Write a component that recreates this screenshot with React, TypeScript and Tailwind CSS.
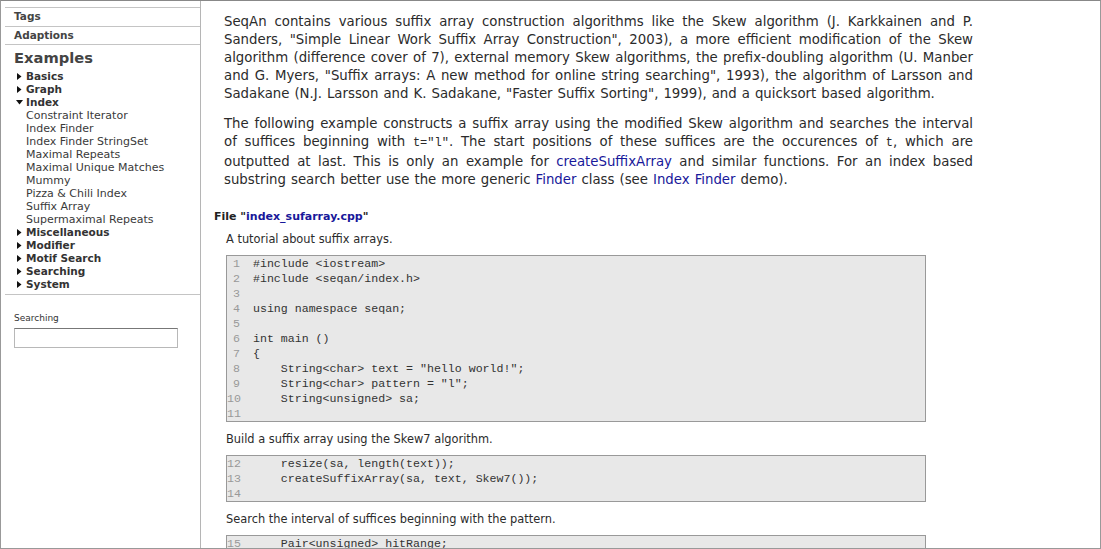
import React from "react";

const Tri = ({ open }: { open?: boolean }) =>
  open ? (
    <svg width="7" height="5" viewBox="0 0 7 5" className="absolute left-[11px] top-[4px]">
      <polygon points="0,0 7,0 3.5,4.5" fill="#111" />
    </svg>
  ) : (
    <svg width="5" height="7" viewBox="0 0 5 7" className="absolute left-[12px] top-[3px]">
      <polygon points="0,0 4.5,3.5 0,7" fill="#111" />
    </svg>
  );

const Group = ({ label, open }: { label: string; open?: boolean }) => (
  <div className="relative h-[13px] pl-[21px] font-bold text-[10.5px] leading-[13px] text-[#333]">
    <Tri open={open} />
    {label}
  </div>
);

const Sub = ({ label }: { label: string }) => (
  <div className="h-[13px] pl-[21px] text-[11px] leading-[13px] text-[#3a3a3a]">{label}</div>
);

const J = ({ children, extra }: { children: React.ReactNode; extra?: boolean }) => (
  <span className={extra ? "block pb-[1px] text-justify [text-align-last:justify]" : "block text-justify [text-align-last:justify]"}>
    {children}
  </span>
);

const L = ({ children }: { children: React.ReactNode }) => (
  <span className="block [word-spacing:0.8px]">{children}</span>
);

const Lk = ({ children }: { children: React.ReactNode }) => (
  <span className="text-[#18189a]">{children}</span>
);

const Mono = ({ children }: { children: React.ReactNode }) => (
  <span className="font-['Liberation_Mono',monospace] text-[12px]">{children}</span>
);

const Code = ({ lines }: { lines: [number, string][] }) => (
  <div className="w-[700px] border border-[#999] bg-[#e8e8e8] font-['Liberation_Mono',monospace] text-[11.6px] leading-[15px]">
    {lines.map(([n, t]) => (
      <div key={n} className="flex h-[15px]">
        <span className="w-[13px] text-right text-[#999] shrink-0">{n}</span>
        <span className="ml-[13px] whitespace-pre text-[#333]">{t}</span>
      </div>
    ))}
  </div>
);

export default function App() {
  return (
    <div className="w-[1101px] h-[549px] border border-[#999] border-t-[#888] bg-white flex overflow-hidden font-['DejaVu_Sans',Verdana,sans-serif]">
      <aside className="w-[200px] shrink-0 border-r border-[#b5b5b5]">
        <div className="ml-[4px]">
          <div className="h-[7px] border-b border-[#c4c4c4]" />
          <div className="h-[19px] border-b border-[#c4c4c4] flex items-center pl-[9px] font-bold text-[10.5px] text-[#444]">
            Tags
          </div>
          <div className="h-[18px] border-b border-[#c4c4c4] flex items-center pl-[9px] font-bold text-[10.5px] text-[#444]">
            Adaptions
          </div>
          <div className="border-b border-[#c4c4c4] pb-[3px]">
            <div className="mt-[4px] h-[18px] pl-[9px] font-bold text-[14.7px] leading-[18px] text-[#444]">
              Examples
            </div>
            <div className="mt-[2.5px]">
              <Group label="Basics" />
              <Group label="Graph" />
              <Group label="Index" open />
              <Sub label="Constraint Iterator" />
              <Sub label="Index Finder" />
              <Sub label="Index Finder StringSet" />
              <Sub label="Maximal Repeats" />
              <Sub label="Maximal Unique Matches" />
              <Sub label="Mummy" />
              <Sub label="Pizza & Chili Index" />
              <Sub label="Suffix Array" />
              <Sub label="Supermaximal Repeats" />
              <Group label="Miscellaneous" />
              <Group label="Modifier" />
              <Group label="Motif Search" />
              <Group label="Searching" />
              <Group label="System" />
            </div>
          </div>
          <div className="pl-[9px]">
            <div className="mt-[17px] text-[9px] leading-[12px] text-[#333]">Searching</div>
            <div className="mt-[4px] w-[164px] h-[20px] border border-[#b8b8b8] border-t-[#777] bg-white" />
          </div>
        </div>
      </aside>
      <main className="flex-1 pt-[12px]">
        <div className="pl-[23px] w-[772px] text-[13.3px] leading-[18px] text-[#2b2b2b]">
          <p>
            <J>SeqAn contains various suffix array construction algorithms like the Skew algorithm (J. Karkkainen and P.</J>
            <J>Sanders, "Simple Linear Work Suffix Array Construction", 2003), a more efficient modification of the Skew</J>
            <J>algorithm (difference cover of 7), external memory Skew algorithms, the prefix-doubling algorithm (U. Manber</J>
            <J>and G. Myers, "Suffix arrays: A new method for online string searching", 1993), the algorithm of Larsson and</J>
            <L>Sadakane (N.J. Larsson and K. Sadakane, "Faster Suffix Sorting", 1999), and a quicksort based algorithm.</L>
          </p>
          <p className="mt-[12px]">
            <J>The following example constructs a suffix array using the modified Skew algorithm and searches the interval</J>
            <J extra>
              of suffices beginning with <Mono>t="l"</Mono>. The start positions of these suffices are the occurences of <Mono>t</Mono>, which are
            </J>
            <J>
              outputted at last. This is only an example for <Lk>createSuffixArray</Lk> and similar functions. For an index based
            </J>
            <L>
              substring search better use the more generic <Lk>Finder</Lk> class (see <Lk>Index Finder</Lk> demo).
            </L>
          </p>
        </div>
        <div className="pl-[13px] mt-[19px]">
          <div className="h-[18px] font-bold text-[11px] leading-[18px] text-[#222]">
            File "<Lk>index_sufarray.cpp</Lk>"
          </div>
          <div className="pl-[12px]">
            <div className="mt-[4px] text-[11.4px] leading-[18px] text-[#2b2b2b]">A tutorial about suffix arrays.</div>
            <div className="mt-[7px]">
              <Code
                lines={[
                  [1, "#include <iostream>"],
                  [2, "#include <seqan/index.h>"],
                  [3, ""],
                  [4, "using namespace seqan;"],
                  [5, ""],
                  [6, "int main ()"],
                  [7, "{"],
                  [8, '    String<char> text = "hello world!";'],
                  [9, '    String<char> pattern = "l";'],
                  [10, "    String<unsigned> sa;"],
                  [11, ""],
                ]}
              />
            </div>
            <div className="mt-[8px] text-[11.4px] leading-[18px] text-[#2b2b2b]">Build a suffix array using the Skew7 algorithm.</div>
            <div className="mt-[7px]">
              <Code
                lines={[
                  [12, "    resize(sa, length(text));"],
                  [13, "    createSuffixArray(sa, text, Skew7());"],
                  [14, ""],
                ]}
              />
            </div>
            <div className="mt-[8px] text-[11.4px] leading-[18px] text-[#2b2b2b]">Search the interval of suffices beginning with the pattern.</div>
            <div className="mt-[7px]">
              <Code lines={[[15, "    Pair<unsigned> hitRange;"]]} />
            </div>
          </div>
        </div>
      </main>
    </div>
  );
}
